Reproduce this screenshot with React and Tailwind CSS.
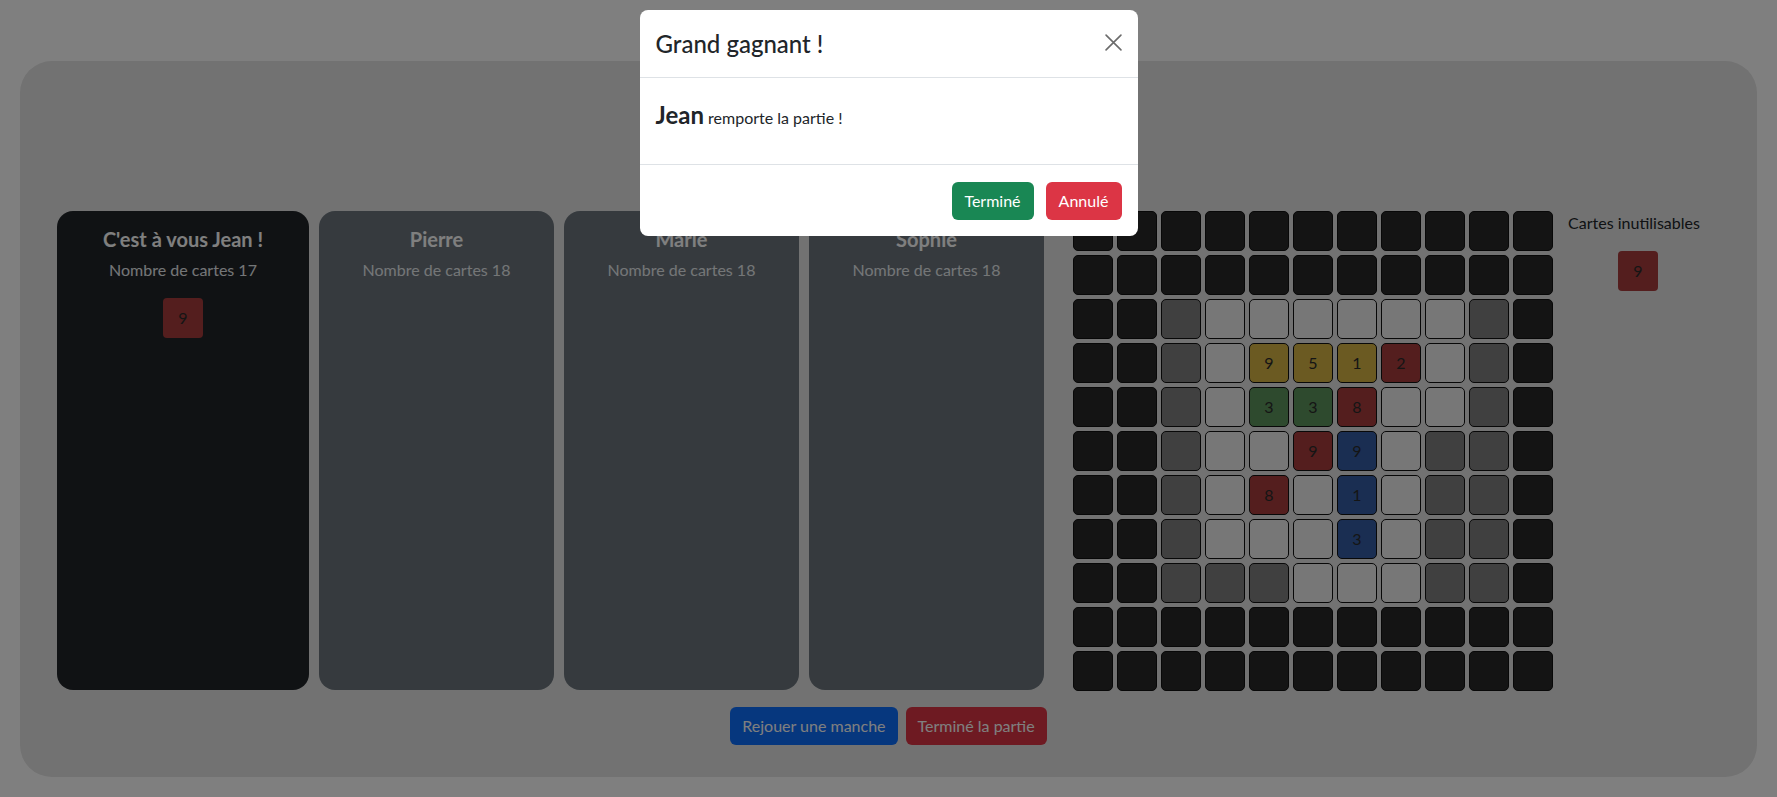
import React from "react";

const D = { bg: "bg-[#282828]" };
const M = { bg: "bg-[#808080]" };
const L = { bg: "bg-[#eeeeee]" };
const Y = (n) => ({ bg: "bg-[#d6b444]", n });
const R = (n) => ({ bg: "bg-[#a83c3c]", n });
const G = (n) => ({ bg: "bg-[#5c945c]", n });
const B = (n) => ({ bg: "bg-[#345ca4]", n });

const dark = [D, D, D, D, D, D, D, D, D, D, D];

const board = [
  dark,
  dark,
  [D, D, M, L, L, L, L, L, L, M, D],
  [D, D, M, L, Y(9), Y(5), Y(1), R(2), L, M, D],
  [D, D, M, L, G(3), G(3), R(8), L, L, M, D],
  [D, D, M, L, L, R(9), B(9), L, M, M, D],
  [D, D, M, L, R(8), L, B(1), L, M, M, D],
  [D, D, M, L, L, L, B(3), L, M, M, D],
  [D, D, M, M, M, L, L, L, M, M, D],
  dark,
  dark,
];

const players = [
  { name: "Pierre", count: 18 },
  { name: "Marie", count: 18 },
  { name: "Sophie", count: 18 },
];

function Cell({ cell }) {
  return (
    <div
      className={`w-[40px] h-[40px] rounded-[5px] border border-[#111] flex items-center justify-center text-[16px] text-[#2b2b2b] ${cell.bg}`}
    >
      {cell.n}
    </div>
  );
}

export default function App() {
  return (
    <div
      className="relative min-h-screen bg-white pt-[61px] px-[20px] pb-[20px]"
      style={{ fontFamily: "Lato, 'Open Sans', sans-serif" }}
    >
      <div className="h-[716px] rounded-[32px] bg-[#e4e4e4] pt-[150px] pl-[37px] pb-[32px] flex flex-col">
        <div className="flex h-[480px]">
          {/* current player */}
          <div className="w-[252px] h-[479px] rounded-[16px] bg-[#212529] flex flex-col items-center pt-[16px]">
            <div className="text-[20px] leading-[24px] font-bold text-white">
              C'est à vous Jean !
            </div>
            <div className="mt-[7px] text-[16px] leading-[24px] text-[#e9ecef]">
              Nombre de cartes 17
            </div>
            <div className="mt-[16px] w-[40px] h-[40px] rounded-[4px] bg-[#a83c3c] flex items-center justify-center text-[16px] text-[#2b2b2b]">
              9
            </div>
          </div>

          {players.map((p) => (
            <div
              key={p.name}
              className="ml-[10px] w-[235px] h-[479px] rounded-[16px] bg-[#6c757d] flex flex-col items-center pt-[16px]"
            >
              <div className="text-[20px] leading-[24px] font-bold text-white">
                {p.name}
              </div>
              <div className="mt-[7px] text-[16px] leading-[24px] text-[#e9ecef]">
                Nombre de cartes {p.count}
              </div>
            </div>
          ))}

          {/* board */}
          <div className="ml-[29px] grid grid-cols-11 gap-[4px] h-fit">
            {board.map((row, r) =>
              row.map((cell, c) => <Cell key={`${r}-${c}`} cell={cell} />)
            )}
          </div>

          {/* unusable cards */}
          <div className="ml-[16px] w-[130px] flex flex-col items-center">
            <div className="text-[16px] leading-[24px] text-[#212529] whitespace-nowrap">
              Cartes inutilisables
            </div>
            <div className="mt-[16px] ml-[8px] w-[40px] h-[40px] rounded-[4px] bg-[#a83c3c] flex items-center justify-center text-[16px] text-[#2b2b2b]">
              9
            </div>
          </div>
        </div>

        <div className="mt-[16px] flex justify-center gap-[8px] pr-[37px]">
          <button className="h-[38px] px-[12px] rounded-[6px] bg-[#0d6efd] text-white text-[16px]">
            Rejouer une manche
          </button>
          <button className="h-[38px] px-[12px] rounded-[6px] bg-[#dc3545] text-white text-[16px]">
            Terminé la partie
          </button>
        </div>
      </div>

      {/* backdrop */}
      <div className="fixed inset-0 bg-black/50" />

      {/* modal */}
      <div className="fixed inset-0 flex justify-center pt-[10px]">
        <div className="w-[498px] h-fit bg-white rounded-[8px] text-[#212529]">
          <div className="h-[68px] px-[16px] flex items-center justify-between border-b border-[#dee2e6]">
            <div className="text-[24px] leading-[36px] font-medium">
              Grand gagnant !
            </div>
            <button className="w-[17px] h-[17px] flex items-center justify-center text-[#6b6b6b] mb-[2px]">
              <svg width="17" height="17" viewBox="0 0 16 16" fill="none">
                <path
                  d="M1 1 L15 15 M15 1 L1 15"
                  stroke="currentColor"
                  strokeWidth="1.5"
                  strokeLinecap="round"
                />
              </svg>
            </button>
          </div>
          <div className="h-[87px] px-[16px] pt-[22px] border-b border-[#dee2e6]">
            <span className="text-[24px] leading-[29px] font-bold">Jean</span>{" "}
            <span className="text-[16px]">remporte la partie !</span>
          </div>
          <div className="h-[71px] px-[16px] flex items-center justify-end gap-[12px]">
            <button className="h-[38px] w-[82px] rounded-[6px] bg-[#198754] text-white text-[16px]">
              Terminé
            </button>
            <button className="h-[38px] w-[76px] rounded-[6px] bg-[#dc3545] text-white text-[16px]">
              Annulé
            </button>
          </div>
        </div>
      </div>
    </div>
  );
}
